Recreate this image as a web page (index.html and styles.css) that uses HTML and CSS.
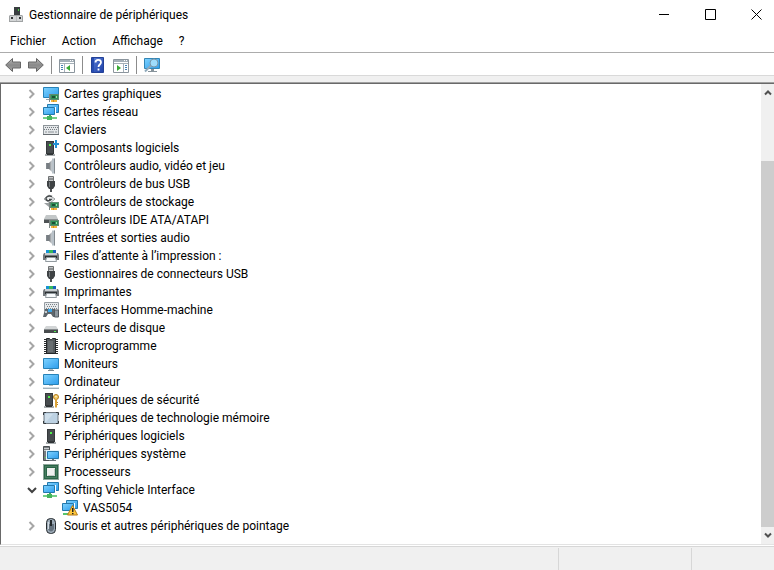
FILE: index.html
```
<!DOCTYPE html>
<html lang="fr">
<head>
<meta charset="UTF-8" />
<meta name="viewport" content="width=device-width, initial-scale=1.0" />
<title>Gestionnaire de périphériques</title>
<link rel="stylesheet" href="styles.css">
</head>
<body>

<!-- icons -->
<svg class="sprite" aria-hidden="true">
    <defs>
        <linearGradient id="blue" x1="0" y1="0" x2="1" y2="1">
            <stop offset="0" stop-color="#7fd3ff" />
            <stop offset="1" stop-color="#2c9cec" />
        </linearGradient>
        <linearGradient id="grey" x1="0" y1="0" x2="1" y2="0">
            <stop offset="0" stop-color="#6d7276" />
            <stop offset="0.6" stop-color="#c3c8cc" />
            <stop offset="1" stop-color="#73787c" />
        </linearGradient>
        <linearGradient id="arrow" x1="0" y1="0" x2="0" y2="1">
            <stop offset="0" stop-color="#b9b9b9" />
            <stop offset="0.5" stop-color="#8a8a8a" />
            <stop offset="1" stop-color="#a5a5a5" />
        </linearGradient>
        <linearGradient id="help" x1="0" y1="0" x2="1" y2="1">
            <stop offset="0" stop-color="#5b7fd6" />
            <stop offset="1" stop-color="#1c3fa8" />
        </linearGradient>
    </defs>
    <symbol id="chevron" viewBox="0 0 8 10">
        <path d="M1.500 1l4 4-4 4" fill="none" stroke="#a6a6a6" stroke-width="2" />
    </symbol>
    <symbol id="card" viewBox="0 0 16 16">
        <path d="M6 8h1v8H6z" fill="#7d8784" />
        <path d="M7 8h9v6H7z" fill="#5f8a70" />
        <path d="M8 9h7v4H8z" fill="#2f9157" />
        <path d="M9 10h3v2H9z" fill="#1c4f34" />
        <path d="M13 10h1v2h-1z" fill="#9be0ae" />
        <path d="M8 14h6v2H8z" fill="#f2b83e" />
        <path d="M10 14h1v2h-1z" fill="#d08a22" />
    </symbol>
    <symbol id="display" viewBox="0 0 16 16">
        <path d="M.5 1.500h15v10H.5z" fill="url(#blue)" stroke="#2782b8" />
        <path d="M3 13h3v1H3z" fill="#9ba5ac" />
        <use href="#card" width="16" height="16" />
    </symbol>
    <symbol id="screens" viewBox="0 0 16 16">
        <path d="M4.500.500h11v8h-11z" fill="url(#blue)" stroke="#2479ad" />
        <path d="M0 3h13v9H0z" fill="#fff" />
        <path d="M.5 3.500h11v7H.5z" fill="url(#blue)" stroke="#2479ad" />
    </symbol>
    <symbol id="network" viewBox="0 0 16 16">
        <use href="#screens" width="16" height="16" />
        <path d="M6 11h2v2H6z" fill="#3fae57" />
        <path d="M0 13h14v2H0z" fill="#74cf86" />
        <path d="M4 12h5v4H4z" fill="#45b45d" />
    </symbol>
    <symbol id="keyboard" viewBox="0 0 16 16">
        <path d="M0 3h16v10H0z" fill="#8e959a" />
        <path d="M1 4h14v8H1z" fill="#e4e7e9" />
        <path d="M2 5.500h13M1 7.500h14" stroke="#747b80" stroke-dasharray="1 1" />
        <path d="M2 10h2M5 10h6M12 10h2" stroke="#8d9398" />
        <path d="M0 12h16v1H0z" fill="#666c70" />
    </symbol>
    <symbol id="tower" viewBox="0 0 16 16">
        <path d="M4 1h8v13H4z" fill="#34383a" />
        <path d="M5 2h6v11H5z" fill="#474c4f" />
        <path d="M7 4h2v2H7z" fill="#52f04c" />
        <path d="M3 14h10v2H3z" fill="#a6abad" />
        <path d="M5 14h6v1H5z" fill="#303436" />
    </symbol>
    <symbol id="component" viewBox="0 0 16 16">
        <use href="#tower" x="-1" width="16" height="16" />
        <path d="M12 0h2v3h2v2h-2v3h-2V5h-2V3h2z" fill="#2290d4" />
    </symbol>
    <symbol id="speaker" viewBox="0 0 16 16">
        <path d="M3 5h3v6H3z" fill="#787e83" />
        <path d="M6 5l4-4v14l-4-4z" fill="url(#grey)" />
        <path d="M9 .5h3v15H9z" fill="#b9c2c9" />
        <path d="M11.500.500v15M3.500 5v6" stroke="#82898e" />
    </symbol>
    <symbol id="usb" viewBox="0 0 16 16">
        <path d="M5.500.500h5v5h-5z" fill="#c4c6c7" stroke="#6e7172" />
        <path d="M6.500 2h1v2h-1zM8.500 2h1v2h-1z" fill="#55595b" />
        <path d="M4 5h8v5l-2 3H6l-2-3z" fill="#3f4345" />
        <path d="M6 6h1v5H6z" fill="#777c7f" />
        <path d="M7 13h2v3H7z" fill="#4d5153" />
    </symbol>
    <symbol id="storage" viewBox="0 0 16 16">
        <path d="M1 5l5-4 6 4-5 4z" fill="#eceeee" stroke="#9a9ea0" />
        <path d="M9 2.500C6 1 2.500 3 3 5s3 2.500 5 .5H6" fill="none" stroke="#45494b" stroke-width="1.500" />
        <path d="M1 9l5 4V9z" fill="#9a9fa1" />
        <use href="#card" width="16" height="16" />
    </symbol>
    <symbol id="ide" viewBox="0 0 16 16">
        <path d="M3 3h10l2 4H1z" fill="#c3c7c8" />
        <path d="M1 7h14v4H1z" fill="#4e5355" />
        <path d="M1 7h14v1H1z" fill="#8b9092" />
        <use href="#card" width="16" height="16" />
    </symbol>
    <symbol id="printer" viewBox="0 0 16 16">
        <path d="M3 2h10v4H3z" fill="#1593d6" />
        <path d="M6 2h4v3H6z" fill="#36b95a" />
        <path d="M10 2h3v3h-3z" fill="#1762bd" />
        <path d="M1 5h14l1 2v5H0V7z" fill="#74797d" />
        <path d="M2 5h12v2H2z" fill="#c8cdd0" />
        <path d="M2 8h12v2H2z" fill="#2d3234" />
        <path d="M3.500 9.500h9l1 4h-11z" fill="#f7fafc" stroke="#929a9f" />
    </symbol>
    <symbol id="hid" viewBox="0 0 16 16">
        <path d="M1.500.500h14v8h-14z" fill="#e7eaec" stroke="#969da2" />
        <path d="M3 2.500h11M4 4.500h10M3 6.500h11" stroke="#7b8287" stroke-dasharray="1 1" />
        <path d="M2 7h3l1 1h2l1-1h3l1 8h-3l-2-3H5l-2 3H0z" fill="#5d666c" />
        <path d="M2 9h2v2H2z" fill="#c6ced3" />
        <path d="M5 7h4v3H5z" fill="#3ba6e7" />
        <path d="M11.500 8h4v7h-4z" fill="#8d979e" stroke="#525a60" />
    </symbol>
    <symbol id="disk" viewBox="0 0 16 16">
        <path d="M3 6h10l2 3H1z" fill="#d2d5d6" />
        <path d="M1 9h14v4H1z" fill="#474b4d" />
        <path d="M1 9h14v1H1z" fill="#858a8c" />
        <path d="M11 11h2v1h-2z" fill="#53ec50" />
    </symbol>
    <symbol id="firmware" viewBox="0 0 16 16">
        <path d="M2.500 1v15M13.500 1v15" stroke="#2c2f31" stroke-width="3" stroke-dasharray="1 1" />
        <path d="M3.500.500h3l1 1h1l1-1h3v15h-9z" fill="#555a5d" stroke="#232628" />
        <path d="M5 3h5v11H5z" fill="#686d70" />
    </symbol>
    <symbol id="monitor" viewBox="0 0 16 16">
        <path d="M.5 2.500h15v10H.5z" fill="url(#blue)" stroke="#2782b8" />
        <path d="M6 13h4v1H6z" fill="#b0babf" />
        <path d="M5 14h6v1H5z" fill="#7f898f" />
    </symbol>
    <symbol id="computer" viewBox="0 0 16 16">
        <path d="M.5.500h15v10H.5z" fill="url(#blue)" stroke="#2782b8" />
        <path d="M6 11h4v1H6z" fill="#b0babf" />
        <path d="M1 13h14l1 1v1H0v-1z" fill="#a2b1ba" />
        <path d="M1 13h14v1H1z" fill="#d7e0e5" />
    </symbol>
    <symbol id="security" viewBox="0 0 16 16">
        <use href="#tower" x="-2" width="16" height="16" />
        <circle cx="13" cy="5" r="2.500" fill="#f2ce6d" stroke="#b67c1c" />
        <path d="M12 7h2v8l-1 1-1-1z" fill="#dca43a" />
        <path d="M14 10h1v1h-1zM14 12h1v1h-1z" fill="#b67c1c" />
        <path d="M12.500 4h1v1h-1z" fill="#fff" />
    </symbol>
    <symbol id="memory" viewBox="0 0 16 16">
        <rect x="1" y="2.500" width="14" height="11" rx="1" fill="#bdd2e3" stroke="#717b83" />
        <path d="M2 4h8L3 12H2z" fill="#cfdfeb" />
        <path d="M.5 5V2.500H3M13 2.500h2.500V5M.5 11v2.500H3M13 13.500h2.500V11" fill="none" stroke="#343a3e" />
    </symbol>
    <symbol id="system" viewBox="0 0 16 16">
        <path d="M.5.500h6v14h-6z" fill="#777d81" stroke="#4b5053" />
        <path d="M1 2.500h5M1 4.500h5" stroke="#c9cdcf" />
        <path d="M2 11h1v1H2z" fill="#4ee44b" />
        <path d="M3 4h13v10H3z" fill="#e4f3fb" />
        <path d="M4.500 5.500h11v7h-11z" fill="url(#blue)" stroke="#2479ad" />
        <path d="M9 13h2v1H9zM7 14h6v1H7z" fill="#6b747a" />
    </symbol>
    <symbol id="cpu" viewBox="0 0 16 16">
        <path d="M1 1h14v14H1z" fill="#2a6546" />
        <path d="M.5.500h15v15H.5z" fill="none" stroke="#1d4d35" stroke-dasharray="1 1" />
        <path d="M2.500 2.500h11v11h-11z" fill="none" stroke="#64947a" stroke-dasharray="1 1" />
        <path d="M4 4h8v8H4z" fill="#eef0ee" />
        <path d="M5 11.500h6.500V5" fill="none" stroke="#c3cac6" />
    </symbol>
    <symbol id="warning" viewBox="0 0 16 16">
        <use href="#screens" width="16" height="16" />
        <path d="M1 13h5v2H1z" fill="#57c46d" />
        <path d="M10.500 5.500l5 9.500h-10z" fill="#ffc83b" stroke="#b67b16" stroke-linejoin="round" />
        <path d="M10 8h1.500v4H10zM10 13h1.500v1.200H10z" fill="#222" />
    </symbol>
    <symbol id="mouse" viewBox="0 0 16 16">
        <rect x="3.500" y=".5" width="9" height="15" rx="4" fill="#9caab6" stroke="#272c30" />
        <path d="M5 6h6v5q-3 5-6 0z" fill="#65727e" />
        <path d="M7 2h2v6H7z" fill="#23282b" />
        <path d="M5.500 4v7" stroke="#d4dce3" />
    </symbol>
</svg>

<header class="titlebar">
    <svg class="icon" viewBox="0 0 16 16">
        <path d="M6 0h6v9H6z" fill="#393e40" />
        <path d="M10 2h1v2h-1z" fill="#49d545" />
        <path d="M2 8h12l1 1v6H1V9z" fill="#a0a3a4" />
        <path d="M2 9h12v5H2z" fill="#d3d5d6" />
        <path d="M3 10h2v2H3zM11 10h2v2h-2z" fill="#303436" />
        <path d="M8 9h1v5H8z" fill="#b9bbbc" />
    </svg>
    <h1 class="title">Gestionnaire de périphériques</h1>
    <div class="window-buttons">
        <button aria-label="Réduire"><svg viewBox="0 0 11 11"><path d="M0 5.500h10" /></svg></button>
        <button aria-label="Agrandir"><svg viewBox="0 0 11 11"><path d="M.5.500h10v10h-10z" /></svg></button>
        <button aria-label="Fermer"><svg viewBox="0 0 11 11"><path d="M.5.500l10 10M10.500.500l-10 10" /></svg></button>
    </div>
</header>

<nav class="menu">
    <button>Fichier</button>
    <button>Action</button>
    <button>Affichage</button>
    <button>?</button>
</nav>

<div class="toolbar">
    <button aria-label="Précédent"><svg class="icon" viewBox="0 0 16 16"><path d="M.700 8L7.500 1.500v3.500h8v6h-8v3.500z" fill="url(#arrow)" stroke="#666" /></svg></button>
    <button aria-label="Suivant"><svg class="icon" viewBox="0 0 16 16"><path d="M15.300 8L8.500 1.500v3.500h-8v6h8v3.500z" fill="url(#arrow)" stroke="#666" /></svg></button>
    <span class="sep"></span>
    <button aria-label="Arborescence"><svg class="icon" viewBox="0 0 16 16">
        <path d="M.5 2.500h15v13H.5z" fill="#fff" stroke="#8b959d" />
        <path d="M1 3h14v2H1z" fill="#a4afb8" />
        <path d="M11 3.500h4" stroke="#fff" stroke-dasharray="1 1" />
        <path d="M1 6.500h14M5.500 7v8" stroke="#a4afb8" />
        <path d="M2 8.500h2M2 10.500h2M2 12.500h2" stroke="#4481b5" />
        <path d="M11 8v6l-4-3z" fill="#39a935" />
    </svg></button>
    <span class="sep"></span>
    <button aria-label="Aide"><svg class="icon" viewBox="0 0 16 16">
        <path d="M1.500.500h12v15h-12z" fill="url(#help)" stroke="#234197" />
        <path d="M2 1h2v14H2z" fill="#274db2" />
        <path d="M5.500 5.500C5.500 1.800 11 2 11 5.300 11 7.500 8.500 7.500 8.500 10M8.500 11.500v2" fill="none" stroke="#fff" stroke-width="1.800" />
    </svg></button>
    <button aria-label="Actions"><svg class="icon" viewBox="0 0 16 16">
        <path d="M.5 2.500h15v13H.5z" fill="#fff" stroke="#8b959d" />
        <path d="M1 3h14v2H1z" fill="#a4afb8" />
        <path d="M11 3.500h4" stroke="#fff" stroke-dasharray="1 1" />
        <path d="M1 6.500h14M10.500 7v8" stroke="#a4afb8" />
        <path d="M12 8.500h2M12 10.500h2M12 12.500h2" stroke="#4481b5" />
        <path d="M4 8v6l4-3z" fill="#39a935" />
    </svg></button>
    <span class="sep"></span>
    <button aria-label="Analyser"><svg class="icon" viewBox="0 0 16 16">
        <path d="M.5 1.500h15v10H.5z" fill="url(#blue)" stroke="#3486b5" />
        <path d="M4 14h9v1H4zM7 12h3v2H7z" fill="#88949c" />
        <path d="M7 8.500l-6 6" stroke="#8fa9ba" stroke-width="2" />
        <circle cx="10" cy="6" r="4" fill="#9fdcfb" stroke="#7996a8" />
    </svg></button>
</div>

<main class="panel">
    <ul class="tree" id="tree"></ul>
    <div class="scrollbar">
        <svg viewBox="0 0 8 6"><path d="M1 5l3-3 3 3" /></svg>
        <div class="track"><div class="thumb"></div></div>
        <svg viewBox="0 0 8 6"><path d="M1 1l3 3 3-3" /></svg>
    </div>
</main>

<footer class="statusbar">
    <span></span>
    <span></span>
    <span></span>
</footer>

<script>
const devices = [
    { name: "Cartes graphiques", icon: "display" },
    { name: "Cartes réseau", icon: "network" },
    { name: "Claviers", icon: "keyboard" },
    { name: "Composants logiciels", icon: "component" },
    { name: "Contrôleurs audio, vidéo et jeu", icon: "speaker" },
    { name: "Contrôleurs de bus USB", icon: "usb" },
    { name: "Contrôleurs de stockage", icon: "storage" },
    { name: "Contrôleurs IDE ATA/ATAPI", icon: "ide" },
    { name: "Entrées et sorties audio", icon: "speaker" },
    { name: "Files d’attente à l’impression :", icon: "printer" },
    { name: "Gestionnaires de connecteurs USB", icon: "usb" },
    { name: "Imprimantes", icon: "printer" },
    { name: "Interfaces Homme-machine", icon: "hid" },
    { name: "Lecteurs de disque", icon: "disk" },
    { name: "Microprogramme", icon: "firmware" },
    { name: "Moniteurs", icon: "monitor" },
    { name: "Ordinateur", icon: "computer" },
    { name: "Périphériques de sécurité", icon: "security" },
    { name: "Périphériques de technologie mémoire", icon: "memory" },
    { name: "Périphériques logiciels", icon: "tower" },
    { name: "Périphériques système", icon: "system" },
    { name: "Processeurs", icon: "cpu" },
    { name: "Softing Vehicle Interface", icon: "network", open: true },
    { name: "VAS5054", icon: "warning", child: true },
    { name: "Souris et autres périphériques de pointage", icon: "mouse" }
];

const openArrow = '<svg viewBox="0 0 10 8"><path d="M1 2l4 4 4-4" fill="none" stroke="#404040" stroke-width="2" /></svg>';
const closedArrow = '<svg viewBox="0 0 8 10"><use href="#chevron" /></svg>';

document.getElementById('tree').innerHTML = devices.map(d => {
    const toggle = d.child ? '' :
        `<button class="toggle${d.open ? ' open' : ''}" aria-label="${d.name}" aria-expanded="${!!d.open}">${d.open ? openArrow : closedArrow}</button>`;
    return `<li class="row${d.child ? ' child' : ''}">${toggle}<svg class="icon"><use href="#${d.icon}" /></svg><span>${d.name}</span></li>`;
}).join('');
</script>

</body>
</html>
```
FILE: styles.css
```
* {
    box-sizing: border-box;
}
body {
    margin: 0;
    height: 100vh;
    display: flex;
    flex-direction: column;
    overflow: hidden;
    background: #fff;
    color: #000;
    font-family: Roboto, "Open Sans", sans-serif;
    font-size: 12px;
    line-height: 18px;
}
button {
    all: unset;
    cursor: default;
}
svg {
    display: block;
}
.sprite {
    width: 0;
    height: 0;
    position: absolute;
}
.icon {
    width: 16px;
    height: 16px;
    flex: none;
}
.titlebar {
    display: flex;
    align-items: center;
    height: 29px;
    padding: 0 12px 0 8px;
    gap: 5px;
}
.title {
    margin: 0;
    flex: 1;
    font-size: 12px;
    font-weight: normal;
}
.window-buttons {
    display: flex;
    gap: 35px;
}
.window-buttons svg {
    width: 11px;
    height: 11px;
    fill: none;
    stroke: #000;
}
.menu {
    display: flex;
    align-items: center;
    gap: 16px;
    height: 24px;
    padding: 0 10px;
    border-bottom: 1px solid #acacac;
}
.toolbar {
    display: flex;
    align-items: center;
    gap: 7px;
    height: 23px;
    padding: 1px 5px 0;
    border-bottom: 1px solid #d9d9d9;
}
.sep {
    width: 1px;
    height: 18px;
    background: #8c8c8c;
}
.panel {
    flex: 1;
    min-height: 0;
    display: flex;
    margin-top: 7px;
    border-top: 1px solid #696969;
    border-left: 1px solid #696969;
    border-bottom: 1px solid #e3e3e3;
    box-shadow: 0 -1px 0 #a0a0a0, 0 -7px 0 #f0f0f0;
}
.tree {
    flex: 1;
    margin: 0;
    padding: 1px 0 0 25px;
    list-style: none;
    overflow: hidden;
}
.row {
    display: flex;
    align-items: center;
    gap: 5px;
    height: 18px;
    white-space: nowrap;
}
.row.child {
    padding-left: 36px;
}
.toggle {
    width: 12px;
    display: flex;
    justify-content: center;
}
.toggle svg {
    width: 8px;
    height: 10px;
}
.toggle.open svg {
    width: 10px;
    height: 8px;
}
.scrollbar {
    width: 13px;
    display: flex;
    flex-direction: column;
    align-items: center;
    background: #f0f0f0;
}
.scrollbar > svg {
    width: 8px;
    height: 17px;
    fill: none;
    stroke: #505050;
    stroke-width: 2;
}
.track {
    flex: 1;
    width: 100%;
    display: flex;
    flex-direction: column;
    justify-content: flex-end;
}
.thumb {
    height: 86%;
    background: #cdcdcd;
}
.statusbar {
    display: grid;
    grid-template-columns: 1fr 133px 83px;
    height: 24px;
    margin-top: 1px;
    padding-top: 1px;
    border-top: 1px solid #d7d7d7;
    background: #f0f0f0;
}
.statusbar span + span {
    border-left: 1px solid #d7d7d7;
}
```
